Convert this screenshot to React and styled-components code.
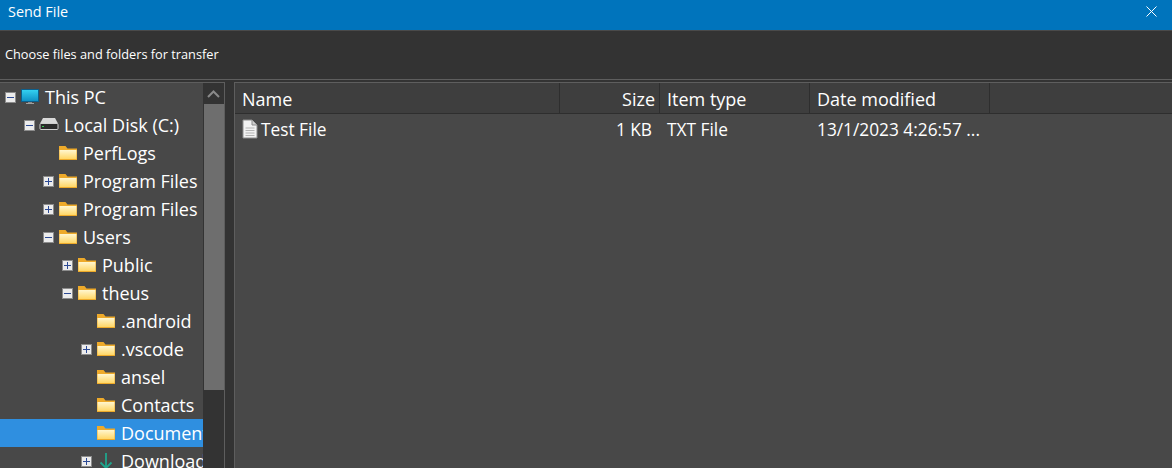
import React from 'react';
import styled, { createGlobalStyle } from 'styled-components';

const GlobalStyle = createGlobalStyle`
  html, body {
    margin: 0;
    padding: 0;
    background: #333333;
    font-family: "Open Sans", "Noto Sans", sans-serif;
  }
`;

const Window = styled.div`
  width: 1172px;
  height: 468px;
  overflow: hidden;
  display: flex;
  flex-direction: column;
  background: #333333;
  color: #ffffff;
`;

const TitleBar = styled.div`
  height: 30px;
  flex: none;
  box-sizing: border-box;
  padding: 0 15px 8px 8px;
  display: flex;
  align-items: center;
  justify-content: space-between;
  background: #0074bc;
  font-size: 14.4px;
`;

const CloseButton = styled.svg`
  width: 11px;
  height: 11px;
  display: block;
`;

const Banner = styled.div`
  height: 50px;
  flex: none;
  box-sizing: border-box;
  padding: 0 5px 2px;
  display: flex;
  align-items: center;
  background: #333333;
  border-top: 1px solid #4a4a4a;
  border-bottom: 1px solid #5e5e5e;
  font-size: 12.75px;
`;

const Panes = styled.div`
  flex: 1;
  min-height: 0;
  display: flex;
  gap: 9px;
  padding-top: 2px;
`;

const TreePane = styled.div`
  width: 225px;
  flex: none;
  display: flex;
  background: #484848;
  border-top: 1px solid #5e5e5e;
  border-right: 1px solid #5e5e5e;
  box-sizing: border-box;
`;

const TreeRows = styled.div`
  width: 203px;
  flex: none;
  overflow: hidden;
`;

const Row = styled.div`
  height: 28px;
  box-sizing: border-box;
  padding-left: ${(p) => 5 + p.$level * 19}px;
  display: flex;
  align-items: center;
  white-space: nowrap;
  font-size: 18px;
  background: ${(p) => (p.$selected ? '#2f8fe0' : 'transparent')};
`;

const ToggleSlot = styled.div`
  width: 11px;
  height: 11px;
  flex: none;
  margin-right: 4px;
`;

const Toggle = styled.svg`
  width: 11px;
  height: 11px;
  display: block;
`;

const RowIcon = styled.svg`
  width: 20px;
  height: 20px;
  flex: none;
  display: block;
  margin-right: 5px;
`;

const ScrollBar = styled.div`
  width: 21px;
  flex: none;
  display: flex;
  flex-direction: column;
  background: #333333;
`;

const ScrollButton = styled.div`
  height: 21px;
  flex: none;
  display: flex;
  align-items: center;
  justify-content: center;
`;

const ScrollThumb = styled.div`
  height: 286px;
  margin-left: 1px;
  background: #6e6e6e;
`;

const ListPane = styled.div`
  flex: 1;
  min-width: 0;
  background: #484848;
  border-top: 1px solid #5e5e5e;
  border-left: 1px solid #5e5e5e;
`;

const Columns = styled.div`
  height: 31px;
  box-sizing: border-box;
  display: flex;
  background: #3e3e3e;
  border-bottom: 1px solid #2e2e2e;
`;

const HeaderCell = styled.div`
  width: ${(p) => p.$width}px;
  box-sizing: border-box;
  padding: 2px ${(p) => p.$right ?? 0}px 0 ${(p) => p.$left ?? 0}px;
  display: flex;
  align-items: center;
  justify-content: ${(p) => (p.$end ? 'flex-end' : 'flex-start')};
  border-right: 1px solid #2e2e2e;
  font-size: 18px;
  white-space: nowrap;
`;

const FileRow = styled.div`
  height: 32px;
  display: flex;
`;

const FileCell = styled.div`
  width: ${(p) => p.$width}px;
  box-sizing: border-box;
  padding: 0 ${(p) => p.$right ?? 0}px 2px ${(p) => p.$left ?? 0}px;
  display: flex;
  align-items: center;
  justify-content: ${(p) => (p.$end ? 'flex-end' : 'flex-start')};
  font-size: 17.3px;
  white-space: nowrap;
`;

const FileIcon = styled.svg`
  width: 16px;
  height: 20px;
  flex: none;
  display: block;
  margin-right: 3px;
`;

const PlusMinus = ({ open }) => (
  <Toggle viewBox="0 0 11 11">
    <rect x="0.5" y="0.5" width="10" height="10" fill="#ececec" stroke="#8c8c8c" />
    <rect x="2" y="5" width="7" height="1" fill="#2c4a94" />
    {!open && <rect x="5" y="2" width="1" height="7" fill="#2c4a94" />}
  </Toggle>
);

const Monitor = () => (
  <RowIcon viewBox="0 0 20 20">
    <defs>
      <linearGradient id="screen" x1="0" y1="0" x2="0" y2="1">
        <stop offset="0" stopColor="#35d3f2" />
        <stop offset="1" stopColor="#0e8fc4" />
      </linearGradient>
    </defs>
    <rect x="1.5" y="2.5" width="17" height="12" fill="url(#screen)" stroke="#0c5f8c" />
    <rect x="8" y="15" width="4" height="1" fill="#8a8a8a" />
    <rect x="6" y="16" width="8" height="1" fill="#a0a0a0" />
  </RowIcon>
);

const Disk = () => (
  <RowIcon viewBox="0 0 20 20">
    <path d="M4 3h12l3 5.5H1z" fill="#d8d8d8" />
    <rect x="1" y="8.5" width="18" height="6" rx="1" fill="#2b2b2b" stroke="#cfcfcf" />
    <rect x="3" y="11" width="2" height="1" fill="#35d04f" />
  </RowIcon>
);

const Folder = () => (
  <RowIcon viewBox="0 0 20 20">
    <defs>
      <linearGradient id="folder" x1="0" y1="0" x2="0" y2="1">
        <stop offset="0" stopColor="#fff6cf" />
        <stop offset="1" stopColor="#ffd766" />
      </linearGradient>
    </defs>
    <path d="M1 3h6.5l2 2.5H19V17H1z" fill="#eeaa2a" />
    <rect x="1.5" y="7" width="17" height="9" fill="url(#folder)" />
  </RowIcon>
);

const DownArrow = () => (
  <RowIcon viewBox="0 0 20 20">
    <path d="M10 2v15M4.5 11.5 10 17l5.5-5.5" fill="none" stroke="#1fa58c" strokeWidth="1.8" />
  </RowIcon>
);

const Page = () => (
  <FileIcon viewBox="0 0 16 20">
    <path d="M1 1h9l5 5v13H1z" fill="#f2f2f2" stroke="#8c8c8c" />
    <path d="M10 1v5h5" fill="#cfcfcf" stroke="#8c8c8c" />
    <path d="M3.5 9h9M3.5 11.5h9M3.5 14h9M3.5 16.5h9" stroke="#b4b4b4" />
  </FileIcon>
);

const treeItems = [
  { level: 0, label: 'This PC', icon: Monitor, toggle: 'open' },
  { level: 1, label: 'Local Disk (C:)', icon: Disk, toggle: 'open' },
  { level: 2, label: 'PerfLogs', icon: Folder },
  { level: 2, label: 'Program Files', icon: Folder, toggle: 'closed' },
  { level: 2, label: 'Program Files', icon: Folder, toggle: 'closed' },
  { level: 2, label: 'Users', icon: Folder, toggle: 'open' },
  { level: 3, label: 'Public', icon: Folder, toggle: 'closed' },
  { level: 3, label: 'theus', icon: Folder, toggle: 'open' },
  { level: 4, label: '.android', icon: Folder },
  { level: 4, label: '.vscode', icon: Folder, toggle: 'closed' },
  { level: 4, label: 'ansel', icon: Folder },
  { level: 4, label: 'Contacts', icon: Folder },
  { level: 4, label: 'Documents', icon: Folder, selected: true },
  { level: 4, label: 'Downloads', icon: DownArrow, toggle: 'closed' },
];

const App = () => (
  <Window>
    <GlobalStyle />
    <TitleBar>
      <span>Send File</span>
      <CloseButton viewBox="0 0 11 11">
        <path d="M0.5 0.5l10 10M10.5 0.5l-10 10" stroke="#ffffff" fill="none" />
      </CloseButton>
    </TitleBar>
    <Banner>Choose files and folders for transfer</Banner>
    <Panes>
      <TreePane>
        <TreeRows>
          {treeItems.map((item, i) => {
            const Icon = item.icon;
            return (
              <Row key={i} $level={item.level} $selected={item.selected}>
                <ToggleSlot>{item.toggle && <PlusMinus open={item.toggle === 'open'} />}</ToggleSlot>
                <Icon />
                <span>{item.label}</span>
              </Row>
            );
          })}
        </TreeRows>
        <ScrollBar>
          <ScrollButton>
            <svg width="13" height="8" viewBox="0 0 13 8">
              <path d="M1 7l5.5-5.5L12 7" fill="none" stroke="#8a8a8a" strokeWidth="2" />
            </svg>
          </ScrollButton>
          <ScrollThumb />
        </ScrollBar>
      </TreePane>
      <ListPane>
        <Columns>
          <HeaderCell $width={325} $left={7}>Name</HeaderCell>
          <HeaderCell $width={100} $end $right={4}>Size</HeaderCell>
          <HeaderCell $width={150} $left={7}>Item type</HeaderCell>
          <HeaderCell $width={180} $left={7}>Date modified</HeaderCell>
        </Columns>
        <FileRow>
          <FileCell $width={325} $left={7}>
            <Page />
            Test File
          </FileCell>
          <FileCell $width={100} $end $right={8}>1 KB</FileCell>
          <FileCell $width={150} $left={7}>TXT File</FileCell>
          <FileCell $width={180} $left={7}>13/1/2023 4:26:57 ...</FileCell>
        </FileRow>
      </ListPane>
    </Panes>
  </Window>
);

export default App;
